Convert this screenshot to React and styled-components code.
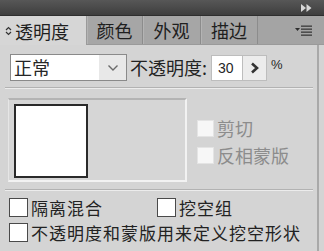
import React from "react";
import styled, { createGlobalStyle } from "styled-components";

const Global = createGlobalStyle`
  html, body { margin: 0; padding: 0; background: #d3d3d3; }
  body { font-family: "Noto Sans CJK SC", "Noto Sans", sans-serif; }
`;

const Panel = styled.div`
  width: 324px;
  height: 251px;
  display: flex;
  flex-direction: column;
  background: #d4d4d4;
  overflow: hidden;
  color: #262626;
`;

const TitleBar = styled.div`
  height: 15px;
  background: linear-gradient(#575757, #3e3e3e);
  display: flex;
  align-items: center;
  justify-content: flex-end;
  padding-right: 12px;
  border-bottom: 1px solid #2e2e2e;
`;

const TabBar = styled.div`
  height: 28px;
  display: flex;
  background: #a4a4a4;
  border-bottom: 1px solid #9a9a9a;
`;

const Tab = styled.div`
  width: ${(p) => p.$w}px;
  display: flex;
  align-items: center;
  justify-content: ${(p) => (p.$active ? "flex-start" : "center")};
  padding-left: ${(p) => (p.$active ? "5px" : "0")};
  box-sizing: border-box;
  font-size: 18px;
  background: ${(p) => (p.$active ? "#d6d6d6" : "#a6a6a6")};
  border-right: 1px solid ${(p) => (p.$active ? "#9a9a9a" : "#8c8c8c")};
  box-shadow: ${(p) => (p.$active ? "none" : "inset 1px 0 0 #b4b4b4")};
  color: #1f1f1f;
  margin-bottom: ${(p) => (p.$active ? "-1px" : "0")};
`;

const TabSpacer = styled.div`
  flex: 1;
  display: flex;
  align-items: center;
  justify-content: flex-end;
  padding-right: 12px;
`;

const Body = styled.div`
  flex: 1;
  display: flex;
  flex-direction: column;
  border-right: 2px solid #a9a9a9;
  margin-right: 5px;
  padding: 9px 0 0 0;
`;

const Row = styled.div`
  display: flex;
  align-items: center;
  height: 27px;
  padding-left: 10px;
`;

const Select = styled.div`
  width: 117px;
  height: 27px;
  box-sizing: border-box;
  border: 1px solid #8a8a8a;
  background: #e8e8e8;
  display: flex;
`;

const SelectValue = styled.div`
  width: 88px;
  background: #fff;
  font-size: 18px;
  line-height: 25px;
  padding-left: 3px;
  box-sizing: border-box;
`;

const SelectArrow = styled.div`
  flex: 1;
  display: flex;
  align-items: center;
  justify-content: center;
`;

const Label = styled.span`
  font-size: ${(p) => (p.$compact ? "17px" : "18px")};
  letter-spacing: ${(p) => (p.$compact ? "1px" : "0")};
  line-height: 21px;
  margin-left: 3px;
  white-space: nowrap;
  color: ${(p) => (p.$disabled ? "#8c8c8c" : "#222")};
`;

const NumInput = styled.div`
  width: 32px;
  height: 26px;
  box-sizing: border-box;
  margin-left: 4px;
  background: #fff;
  border: 1px solid #bdbdbd;
  font-family: "Liberation Sans", Arial, sans-serif;
  font-size: 14px;
  display: flex;
  align-items: center;
  padding-left: 6px;
`;

const StepButton = styled.div`
  width: 24px;
  height: 26px;
  box-sizing: border-box;
  background: #ececec;
  border: 1px solid #bdbdbd;
  border-left: none;
  display: flex;
  align-items: center;
  justify-content: center;
`;

const Percent = styled.span`
  font-family: "Liberation Sans", Arial, sans-serif;
  font-size: 13px;
  margin-left: 4px;
  margin-top: -6px;
`;

const Separator = styled.div`
  height: 0;
  border-top: 1px solid #b2b2b2;
  border-bottom: 1px solid #ececec;
  margin: ${(p) => p.$m || "0"};
`;

const PreviewRow = styled.div`
  display: flex;
  align-items: center;
  margin: 9px 0 0 8px;
`;

const PreviewBox = styled.div`
  width: 179px;
  height: 84px;
  box-sizing: border-box;
  border-top: 2px solid #b4b4b4;
  border-left: 1px solid #e6e6e6;
  border-right: 2px solid #f2f2f2;
  border-bottom: 2px solid #f2f2f2;
  background: #d6d6d6;
  padding: 4px 0 0 5px;
`;

const Thumb = styled.div`
  width: 74px;
  height: 74px;
  box-sizing: border-box;
  border: 2px solid #2a2a2a;
  background: #fff;
`;

const SideOptions = styled.div`
  display: flex;
  flex-direction: column;
  gap: 6px;
  margin-left: 10px;
  margin-top: 4px;
`;

const Check = styled.label`
  display: flex;
  align-items: center;
  height: 21px;
`;

const Box = styled.span`
  width: ${(p) => (p.$disabled ? 17 : 19)}px;
  height: ${(p) => (p.$disabled ? 17 : 19)}px;
  box-sizing: border-box;
  background: ${(p) => (p.$disabled ? "#f7f7f7" : "#fff")};
  border: 1px solid ${(p) => (p.$disabled ? "#e4e4e4" : "#4a4a4a")};
  flex: none;
`;

const Options = styled.div`
  display: flex;
  flex-direction: column;
  gap: 4px;
  padding: 6px 0 0 9px;
`;

const OptionRow = styled.div`
  display: flex;
  align-items: center;
`;

const Slot = styled.div`
  width: 148px;
`;

function Chevron() {
  return (
    <svg width="12" height="8" viewBox="0 0 12 8">
      <path d="M1.5 1.5 L6 6 L10.5 1.5" fill="none" stroke="#6a6a6a" strokeWidth="1.4" />
    </svg>
  );
}

function StepArrow() {
  return (
    <svg width="10" height="12" viewBox="0 0 10 12">
      <path d="M2 1.5 L7 6 L2 10.5" fill="none" stroke="#333" strokeWidth="2.6" />
    </svg>
  );
}

function Collapse() {
  return (
    <svg width="11" height="8" viewBox="0 0 11 8">
      <path d="M0 0 L5 4 L0 8 Z M5.5 0 L10.5 4 L5.5 8 Z" fill="#d8d8d8" />
    </svg>
  );
}

function MenuIcon() {
  return (
    <svg width="17" height="11" viewBox="0 0 17 11">
      <path d="M0 3 L5 3 L2.5 6 Z" fill="#2e2e2e" />
      <rect x="6" y="0.5" width="11" height="1.3" fill="#3a3a3a" />
      <rect x="6" y="3.5" width="11" height="1.3" fill="#3a3a3a" />
      <rect x="6" y="6.5" width="11" height="1.3" fill="#3a3a3a" />
      <rect x="6" y="9.5" width="11" height="1.3" fill="#3a3a3a" />
    </svg>
  );
}

function UpDown() {
  return (
    <svg width="7" height="10" viewBox="0 0 7 10" style={{ marginRight: 3 }}>
      <path d="M1 4 L3.5 1.5 L6 4 M1 6 L3.5 8.5 L6 6" fill="none" stroke="#333" strokeWidth="1.2" />
    </svg>
  );
}

export default function App() {
  return (
    <>
      <Global />
      <Panel>
        <TitleBar>
          <Collapse />
        </TitleBar>
        <TabBar>
          <Tab $active $w={87}>
            <UpDown />
            透明度
          </Tab>
          <Tab $w={56}>颜色</Tab>
          <Tab $w={58}>外观</Tab>
          <Tab $w={57}>描边</Tab>
          <TabSpacer>
            <MenuIcon />
          </TabSpacer>
        </TabBar>
        <Body>
          <Row>
            <Select>
              <SelectValue>正常</SelectValue>
              <SelectArrow>
                <Chevron />
              </SelectArrow>
            </Select>
            <Label>不透明度:</Label>
            <NumInput>30</NumInput>
            <StepButton>
              <StepArrow />
            </StepButton>
            <Percent>%</Percent>
          </Row>
          <Separator $m="6px 4px 0 5px" />
          <PreviewRow>
            <PreviewBox>
              <Thumb />
            </PreviewBox>
            <SideOptions>
              <Check>
                <Box $disabled />
                <Label $disabled>剪切</Label>
              </Check>
              <Check>
                <Box $disabled />
                <Label $disabled>反相蒙版</Label>
              </Check>
            </SideOptions>
          </PreviewRow>
          <Separator $m="7px 4px 0 5px" />
          <Options>
            <OptionRow>
              <Slot>
                <Check>
                  <Box />
                  <Label $compact>隔离混合</Label>
                </Check>
              </Slot>
              <Check>
                <Box />
                <Label $compact>挖空组</Label>
              </Check>
            </OptionRow>
            <Check>
              <Box />
              <Label $compact>不透明度和蒙版用来定义挖空形状</Label>
            </Check>
          </Options>
        </Body>
      </Panel>
    </>
  );
}
